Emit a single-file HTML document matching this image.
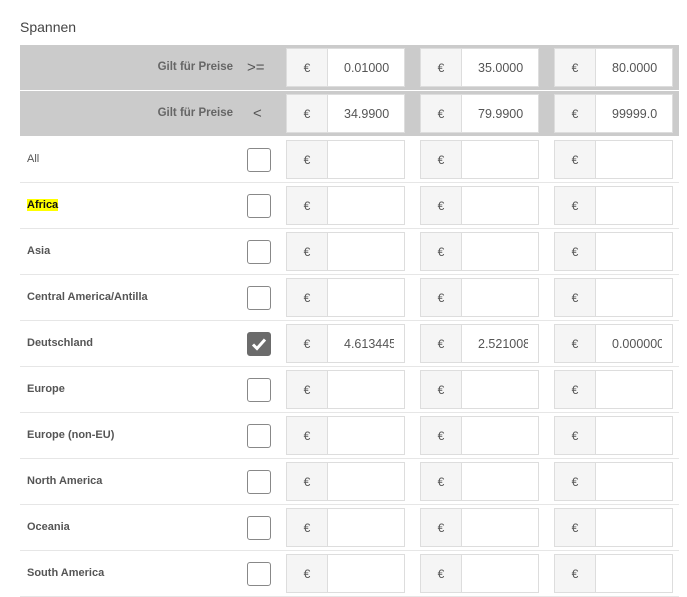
<!DOCTYPE html>
<html><head><meta charset="utf-8"><style>
body{margin:0;width:687px;height:597px;background:#fff;font-family:"Liberation Sans",sans-serif;position:relative;overflow:hidden}
.t{position:absolute;left:20px;top:19px;font-size:14px;color:#444}
.band{position:absolute;left:20px;width:659px;height:45px;background:#cbcbcb}
.grp{position:absolute;width:119px;height:39px;border:1px solid #ddd;box-sizing:border-box;display:flex;background:#fff}
.grp .a{width:40px;background:#f5f5f5;border-right:1px solid #ddd;font-size:12px;color:#555;display:flex;align-items:center;justify-content:center}
.grp .v{flex:1;position:relative;font-size:12.5px;color:#555}
.grp .v span{position:absolute;left:16px;right:10px;top:12px;overflow:hidden;white-space:nowrap}
.lbl{position:absolute;left:27px;font-size:11px;font-weight:bold;color:#555}
.sep{position:absolute;left:20px;width:659px;height:1px;background:#e6e6e6}
.cb{position:absolute;left:247px;width:24px;height:24px;box-sizing:border-box;border:1px solid #888;border-radius:3px;background:#fff}
.gl{position:absolute;font-size:11.5px;font-weight:bold;color:#666;right:454px}
.sym{position:absolute;left:247px;font-size:15px;color:#555}
</style></head><body>
<div class="t">Spannen</div>
<div class="band" style="top:45px"></div>
<div class="band" style="top:91px"></div>
<div class="gl" style="top:61px">Gilt für Preise</div>
<div class="sym" style="top:59px">&gt;=</div>
<div class="gl" style="top:107px">Gilt für Preise</div>
<div class="sym" style="top:105px;left:253px">&lt;</div>
<div id="c"></div>
<script>
(function(){
var h='';
var xs=[286,420,554];
var hv=[["0.01000","35.0000","80.0000"],["34.9900","79.9900","99999.0"]];
function g(x,y,v){return '<div class="grp" style="left:'+x+'px;top:'+y+'px"><div class="a">€</div><div class="v"><span>'+v+'</span></div></div>';}
for(var r=0;r<2;r++)for(var i=0;i<3;i++)h+=g(xs[i],48+46*r,hv[r][i]);
var L=["All","Africa","Asia","Central America/Antilla","Deutschland","Europe","Europe (non-EU)","North America","Oceania","South America"];
for(var k=0;k<10;k++){var ty=137+46*k;
var st=k==0?'font-weight:normal;':'';
var txt=k==1?'<span style="background:#ffff00;color:#111">Africa</span>':L[k];
h+='<div class="lbl" style="top:'+(ty+16)+'px;'+st+'">'+txt+'</div>';
if(k==4)h+='<div class="cb" style="top:'+(ty+11)+'px;background:#6b6b6b;border-color:#6b6b6b"><svg width="22" height="22" viewBox="0 0 22 22" style="position:absolute;left:0;top:0"><path d="M5 11.5l4 4 8-9" stroke="#fff" stroke-width="3" fill="none"/></svg></div>';
else h+='<div class="cb" style="top:'+(ty+11)+'px"></div>';
var vv=k==4?["4.613445","2.521008","0.000000"]:["","",""];
for(var i=0;i<3;i++)h+=g(xs[i],ty+3,vv[i]);
h+='<div class="sep" style="top:'+(ty+45)+'px"></div>';}
document.getElementById('c').innerHTML=h;
})();
</script>
</body></html>
